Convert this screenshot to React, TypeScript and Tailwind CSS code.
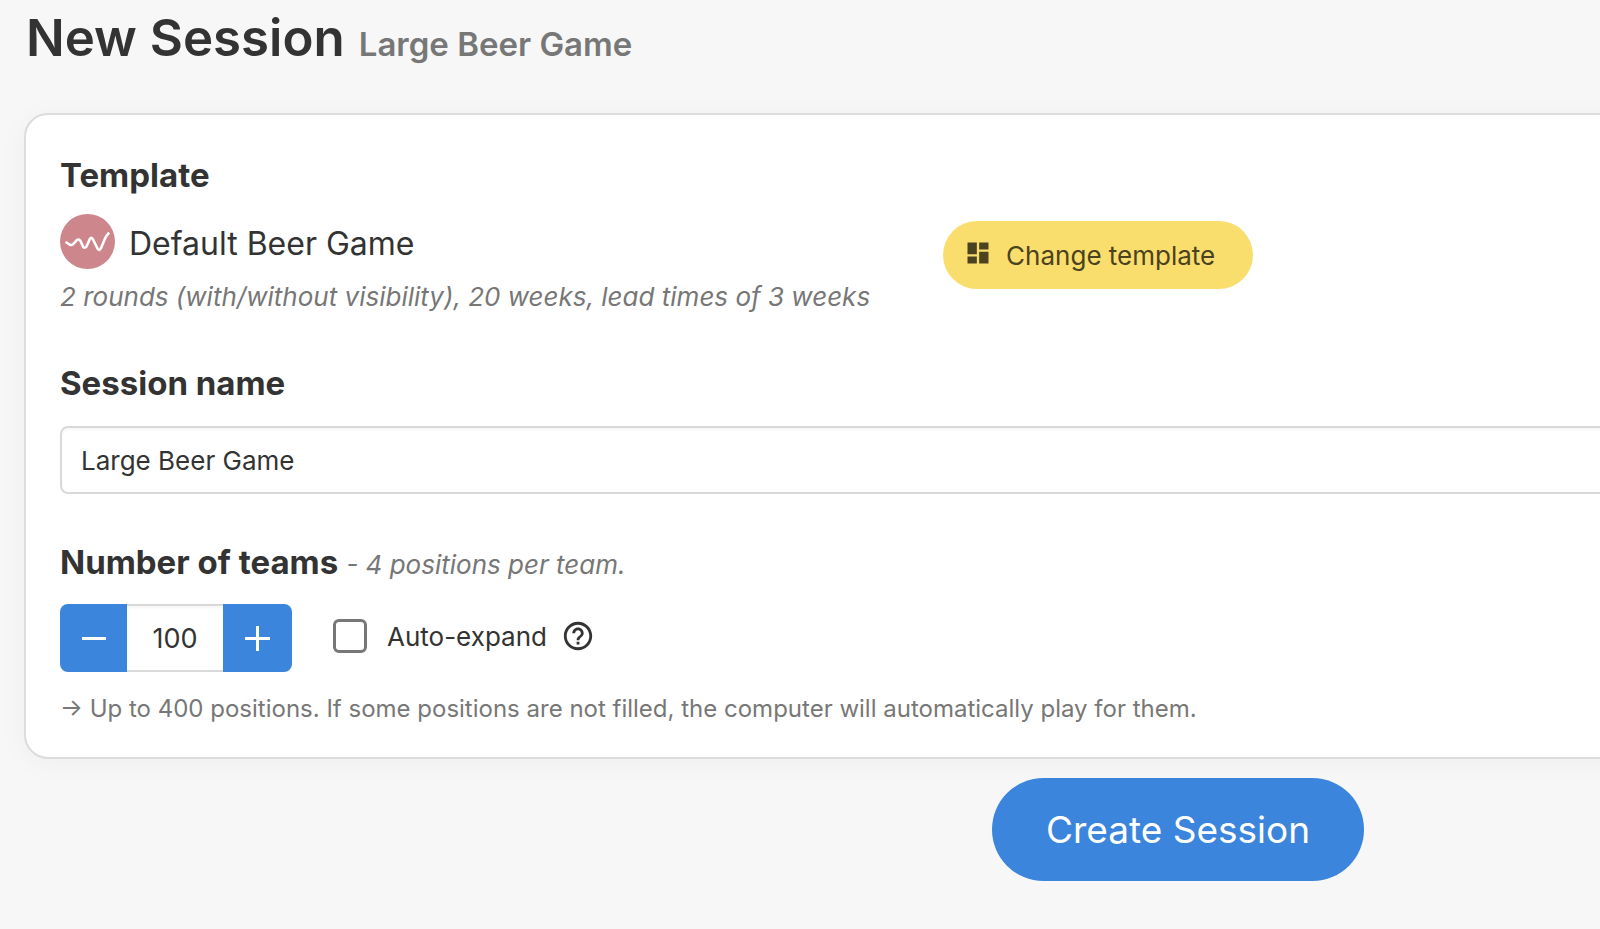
import { useState } from 'react';
import { MdDashboard, MdHelpOutline } from 'react-icons/md';

const POSITIONS_PER_TEAM = 4;

function BeerGameIcon() {
  return (
    <svg viewBox="0 0 55 55" className="h-[55px] w-[55px] shrink-0" aria-hidden="true">
      <circle cx="27.5" cy="27.5" r="27.5" fill="#cd868b" />
      <path
        d="M6.500 28.500L9.500 30.500Q11.800 31.800 13.800 29.500L16.800 26.200Q18.800 24.500 20.500 27L23 32.500Q24.500 35 26.500 32.500L29.800 25Q31.500 22.500 33 25.500L37.500 34.500Q39.500 37.500 41 34L45.500 23.500Q46.800 21 48.500 19.500"
        fill="none"
        stroke="#fff"
        strokeWidth="2.600"
        strokeLinecap="round"
        strokeLinejoin="round"
      />
    </svg>
  );
}

export default function App() {
  const [name, setName] = useState('Large Beer Game');
  const [teams, setTeams] = useState(100);
  const [autoExpand, setAutoExpand] = useState(false);

  return (
    <div className="min-h-screen overflow-x-hidden bg-[#f7f7f7] font-['Inter','Liberation_Sans',sans-serif] text-[#333]">
      {/* The form is wider than the window, so it runs off the right edge */}
      <main className="w-[147%] pr-5 pb-12 pl-6">
        <h1 className="flex items-baseline gap-3.5 pt-1 pl-0.5 text-[51px] leading-[68px] font-semibold">
          New Session
          <small className="text-[33px] font-semibold text-[#777]">Large Beer Game</small>
        </h1>

        <section className="mt-[35px] rounded-3xl border-2 border-[#dcdcdc] bg-white px-[34px] pt-[38px] pb-8 shadow-[0_4px_30px_rgba(0,0,0,0.04)]">
          <h2 className="text-[33px] leading-[44px] font-bold">Template</h2>
          <div className="mt-[17px] flex items-start gap-[73px]">
            <div>
              <div className="flex items-center gap-3.5">
                <BeerGameIcon />
                <span className="pt-1 text-[32px] leading-[44px]">Default Beer Game</span>
              </div>
              <p className="mt-2.5 text-[26px] leading-[36px] text-[#777] italic">
                2 rounds (with/without visibility), 20 weeks, lead times of 3 weeks
              </p>
            </div>
            <button
              type="button"
              className="mt-[7px] flex h-[68px] items-center gap-3.5 rounded-full bg-[#fade6d] pr-[38px] pl-[21px] text-[26px] text-[#4b4220]"
            >
              <MdDashboard className="mb-1 h-7 w-7" />
              Change template
            </button>
          </div>

          <label htmlFor="session-name" className="mt-[46px] block text-[33px] leading-[44px] font-bold">
            Session name
          </label>
          <input
            id="session-name"
            value={name}
            onChange={(e) => setName(e.target.value)}
            className="mt-[21px] h-[68px] w-full rounded-lg border-2 border-[#d9d9d9] px-[19px] text-[26px] shadow-[inset_0_2px_3px_rgba(0,0,0,0.04)]"
          />

          <div className="mt-[46px] flex items-baseline gap-2 leading-[44px]">
            <label htmlFor="teams" className="text-[33px] font-bold">
              Number of teams
            </label>
            <span className="text-[26px] text-[#777] italic">
              - {POSITIONS_PER_TEAM} positions per team.
            </span>
          </div>
          <div className="mt-[17px] flex items-center">
            <div className="flex h-[68px] overflow-hidden rounded-lg">
              <button
                type="button"
                aria-label="Fewer teams"
                onClick={() => setTeams(Math.max(1, teams - 1))}
                className="flex w-[67px] items-center justify-center bg-[#3b85dd]"
              >
                <span className="h-[3px] w-6 bg-white" />
              </button>
              <input
                id="teams"
                inputMode="numeric"
                value={teams}
                onChange={(e) => setTeams(Number(e.target.value) || 0)}
                className="w-24 border-y-2 border-[#d9d9d9] pt-0.5 text-center text-[27px] shadow-[inset_0_2px_3px_rgba(0,0,0,0.04)]"
              />
              <button
                type="button"
                aria-label="More teams"
                onClick={() => setTeams(teams + 1)}
                className="flex w-[69px] items-center justify-center bg-[#3b85dd]"
              >
                <svg viewBox="0 0 25 25" className="h-[25px] w-[25px]" fill="none" stroke="#fff" strokeWidth="3">
                  <path d="M12.500 0v25M0 12.500h25" />
                </svg>
              </button>
            </div>
            <div className="mb-1 ml-[41px] flex items-center gap-3.5">
              <label className="flex items-center gap-5 text-[26px]">
                <input
                  type="checkbox"
                  checked={autoExpand}
                  onChange={(e) => setAutoExpand(e.target.checked)}
                  className="h-[34px] w-[34px] appearance-none rounded-md border-3 border-[#777] checked:bg-[#3b85dd]"
                />
                Auto-expand
              </label>
              <MdHelpOutline className="h-[34px] w-[34px]" />
            </div>
          </div>
          <p className="mt-[21px] text-[24px] leading-[32px] text-[#777]">
            → Up to {teams * POSITIONS_PER_TEAM} positions. If some positions are not filled, the computer will
            automatically play for them.
          </p>
        </section>

        <div className="mt-[19px] flex justify-center">
          <button type="button" className="h-[103px] rounded-full bg-[#3b85dd] px-[54px] text-[37px] text-white">
            Create Session
          </button>
        </div>
      </main>
    </div>
  );
}
